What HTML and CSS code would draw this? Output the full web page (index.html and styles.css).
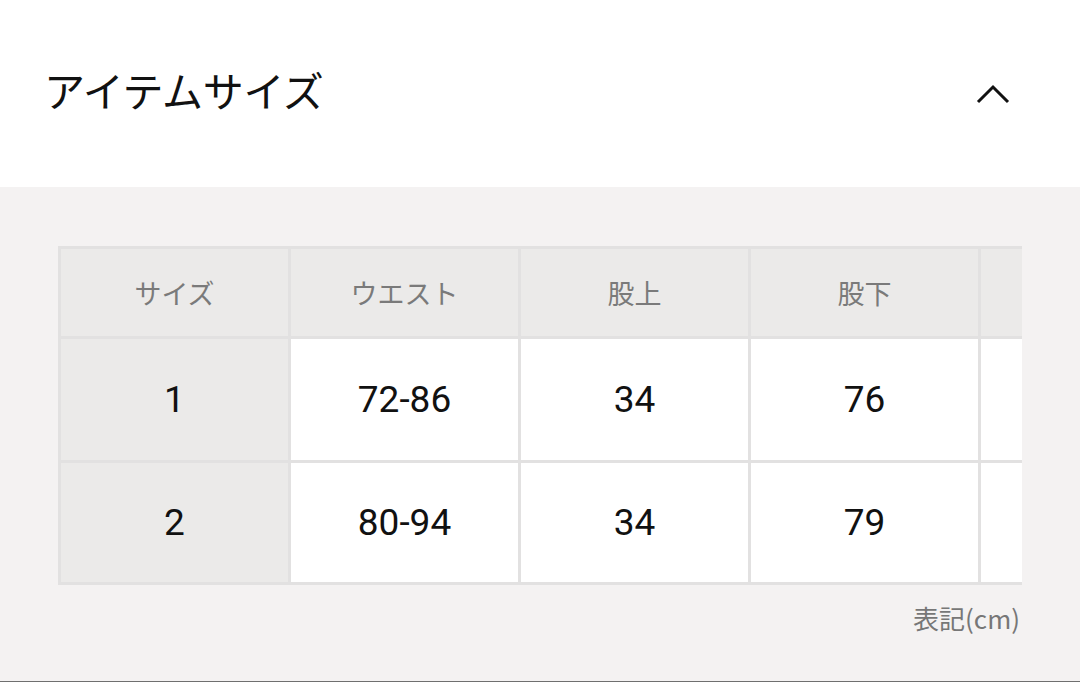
FILE: index.html
```html
<!DOCTYPE html>
<html lang="ja">
<head>
<meta charset="utf-8">
<title>アイテムサイズ</title>
<link rel="stylesheet" href="styles.css">
</head>
<body>
<div class="page">
  <header class="acc-head">
    <h2 class="acc-title">アイテムサイズ</h2>
    <svg class="chevron" width="34" height="20" viewBox="0 0 34 20" aria-hidden="true">
      <path d="M2 18 L17 3 L32 18" fill="none" stroke="#111" stroke-width="3"/>
    </svg>
  </header>
  <section class="acc-body">
    <div class="table-scroll">
      <div class="size-grid">
        <div class="cell head">サイズ</div>
        <div class="cell head">ウエスト</div>
        <div class="cell head">股上</div>
        <div class="cell head">股下</div>
        <div class="cell head"></div>

        <div class="cell rowhead num">1</div>
        <div class="cell num">72-86</div>
        <div class="cell num">34</div>
        <div class="cell num">76</div>
        <div class="cell num"></div>

        <div class="cell rowhead num">2</div>
        <div class="cell num">80-94</div>
        <div class="cell num">34</div>
        <div class="cell num">79</div>
        <div class="cell num"></div>
      </div>
    </div>
    <p class="unit">表記(cm)</p>
  </section>
</div>
</body>
</html>
```

FILE: styles.css
```css
html, body {
  margin: 0;
  padding: 0;
  background: #ffffff;
}
body {
  font-family: "Noto Sans CJK JP", "Noto Sans", sans-serif;
  color: #111;
}
.page {
  width: 1080px;
  height: 682px;
  display: flex;
  flex-direction: column;
  overflow: hidden;
}
.acc-head {
  height: 187px;
  flex: 0 0 auto;
  display: flex;
  align-items: center;
  justify-content: space-between;
  padding: 0 70px 0 44px;
  box-sizing: border-box;
  background: #fff;
}
.acc-title {
  margin: 0;
  font-size: 41px;
  font-weight: 400;
  line-height: 1;
  letter-spacing: -0.3px;
  color: #111;
  transform: translateY(-4px);
}
.chevron {
  display: block;
}
.acc-body {
  flex: 1 1 auto;
  background: #f4f2f2;
  border-bottom: 1px solid #6f6f6f;
  padding: 59px 58px 0 58px;
  box-sizing: border-box;
}
.table-scroll {
  overflow: hidden;
  width: 964px;
}
.size-grid {
  display: grid;
  grid-template-columns: repeat(5, 227px);
  grid-template-rows: 87px 121px 119px;
  gap: 3px;
  padding: 3px;
  background: #e2e1e1;
  width: max-content;
}
.cell {
  display: flex;
  align-items: center;
  justify-content: center;
  background: #fff;
}
.cell.head {
  background: #ebeae9;
  color: #7a7a7a;
  font-size: 27px;
}
.cell.rowhead {
  background: #ebeae9;
}
.num {
  font-family: Roboto, "Noto Sans", sans-serif;
  font-size: 37px;
  color: #111;
}
.unit {
  margin: 17px 0 0 0;
  text-align: right;
  font-size: 26px;
  color: #777;
  line-height: 32px;
  padding-right: 2px;
}
```
